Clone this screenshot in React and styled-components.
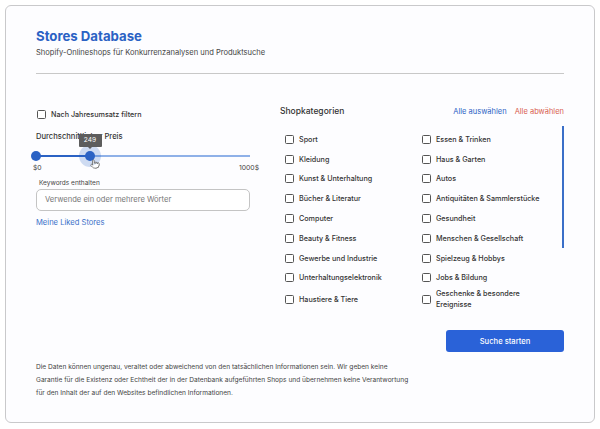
import React from 'react';
import styled, { createGlobalStyle } from 'styled-components';
import { Pointer } from 'lucide-react';

const Global = createGlobalStyle`
  html, body { margin: 0; background: #ffffff; }
  body { width: 600px; height: 429px; overflow: hidden; font-family: Inter, "Liberation Sans", sans-serif; }
  * { box-sizing: border-box; }
`;

const Card = styled.div`
  width: 590px;
  height: 418px;
  margin: 5px 0 0 5px;
  padding: 21px 30px 0 30px;
  background: #fdfdff;
  border: 1px solid #c9c9cb;
  border-radius: 6px;
`;

const Title = styled.h1`
  margin: 0;
  font-size: 13.2px;
  line-height: 18px;
  font-weight: 700;
  color: #2b62c4;
`;

const Subtitle = styled.p`
  margin: 2px 0 0;
  font-size: 7.55px;
  line-height: 11px;
  color: #444;
`;

const Divider = styled.hr`
  margin: 15px 0 0;
  border: 0;
  border-top: 1px solid #c8c8c8;
`;

const Columns = styled.div`
  display: grid;
  grid-template-columns: 214px 284px;
  column-gap: 30px;
  margin-top: 31px;
`;

const Left = styled.div`
  display: flex;
  flex-direction: column;
  padding-top: 3px;
`;

const Box = styled.span`
  flex: none;
  width: 9px;
  height: 9px;
  border: 1px solid #555;
  border-radius: 1.5px;
  background: #fff;
`;

const FilterRow = styled.label`
  display: flex;
  align-items: center;
  gap: 5px;
  height: 12px;
  padding-left: 1px;
  font-size: 7.2px;
  font-weight: 500;
  color: #333;
`;

const SliderLabel = styled.div`
  margin-top: 11px;
  font-size: 7.6px;
  line-height: 11px;
  font-weight: 500;
  color: #333;
`;

const Slider = styled.div`
  position: relative;
  height: 4px;
  margin-top: 12px;
  display: flex;
  align-items: center;
`;

const RailDone = styled.div`
  width: 54px;
  height: 2px;
  background: #2b62c4;
`;

const RailRest = styled.div`
  flex: 1;
  height: 2px;
  background: #8fb1e8;
`;

const Thumb = styled.span`
  position: absolute;
  top: -3px;
  left: ${p => p.$at}px;
  width: 10px;
  height: 10px;
  margin-left: -5px;
  border-radius: 50%;
  background: #2b62c4;
`;

const Halo = styled.span`
  position: absolute;
  top: -9px;
  left: 54px;
  width: 22px;
  height: 22px;
  margin-left: -11px;
  border-radius: 50%;
  background: rgba(43, 98, 196, 0.22);
`;

const Tip = styled.span`
  position: absolute;
  top: -20px;
  left: 54px;
  width: 23px;
  height: 13px;
  margin-left: -11.5px;
  background: #5d5d5d;
  border-radius: 1px;
  color: #fff;
  font-size: 6.6px;
  line-height: 13px;
  text-align: center;
  &::after {
    content: '';
    position: absolute;
    left: 9px;
    bottom: -2px;
    border-left: 2.5px solid transparent;
    border-right: 2.5px solid transparent;
    border-top: 2px solid #5d5d5d;
  }
`;

const Hand = styled(Pointer)`
  position: absolute;
  top: 5px;
  left: 54px;
  color: #444;
  fill: #fff;
`;

const Scale = styled.div`
  display: flex;
  justify-content: space-between;
  margin-top: 5px;
  font-size: 6.8px;
  line-height: 9px;
  color: #444;
  margin-right: -9px;
  margin-left: -3px;
`;

const FieldLabel = styled.div`
  margin: 7px 0 0 3px;
  font-size: 6.5px;
  line-height: 9px;
  color: #444;
`;

const Input = styled.div`
  height: 22px;
  margin-top: 1px;
  padding-left: 8px;
  border: 1px solid #c4c4c4;
  border-radius: 5px;
  background: #fff;
  font-size: 7.6px;
  line-height: 20px;
  color: #777;
`;

const LikedLink = styled.a`
  margin-top: 5.5px;
  font-size: 7.6px;
  line-height: 11px;
  color: #3b70c9;
`;

const Right = styled.div`
  display: flex;
  flex-direction: column;
`;

const CategoryHead = styled.div`
  display: flex;
  align-items: center;
  height: 12px;
  font-size: 7.5px;
`;

const CategoryTitle = styled.h2`
  margin: 0 auto 0 0;
  font-size: 8.5px;
  font-weight: 500;
  color: #333;
`;

const HeadAction = styled.a`
  margin-left: 8px;
  color: ${p => (p.$danger ? '#d9604f' : '#2b62c4')};
`;

const ListWrap = styled.div`
  position: relative;
  margin-top: 9px;
  height: 191px;
`;

const Grid = styled.div`
  display: grid;
  grid-template-columns: 137px 1fr;
  grid-auto-rows: minmax(19.8px, auto);
  padding: 3.5px 15px 0 5px;
`;

const Item = styled.label`
  display: flex;
  align-items: center;
  gap: 5px;
  font-size: 7.2px;
  line-height: 11.3px;
  font-weight: 450;
  color: #333;
`;

const Scrollbar = styled.div`
  position: absolute;
  right: 0;
  top: 0;
  width: 2px;
  height: 122px;
  background: #3a6fc8;
`;

const Submit = styled.button`
  align-self: flex-end;
  width: 118px;
  height: 22px;
  margin-top: 13px;
  border: 0;
  border-radius: 3px;
  background: #2a62d8;
  color: #fff;
  font: 500 7.6px Inter, sans-serif;
`;

const Notice = styled.p`
  width: 378px;
  margin: 9px 0 0;
  font-size: 6.6px;
  line-height: 13px;
  color: #444;
`;

const left = ['Sport', 'Kleidung', 'Kunst & Unterhaltung', 'Bücher & Literatur', 'Computer', 'Beauty & Fitness', 'Gewerbe und Industrie', 'Unterhaltungselektronik', 'Haustiere & Tiere'];
const right = ['Essen & Trinken', 'Haus & Garten', 'Autos', 'Antiquitäten & Sammlerstücke', 'Gesundheit', 'Menschen & Gesellschaft', 'Spielzeug & Hobbys', 'Jobs & Bildung', 'Geschenke & besondere Ereignisse'];

const App = () => (
  <>
    <Global />
    <Card>
      <Title>Stores Database</Title>
      <Subtitle>Shopify-Onlineshops für Konkurrenzanalysen und Produktsuche</Subtitle>
      <Divider />
      <Columns>
        <Left>
          <FilterRow><Box />Nach Jahresumsatz filtern</FilterRow>
          <SliderLabel>Durchschnittlicher Preis</SliderLabel>
          <Slider>
            <RailDone />
            <RailRest />
            <Halo />
            <Thumb $at={0} />
            <Thumb $at={54} />
            <Tip>249</Tip>
            <Hand size={10} strokeWidth={1.5} />
          </Slider>
          <Scale><span>$0</span><span>1000$</span></Scale>
          <FieldLabel>Keywords enthalten</FieldLabel>
          <Input>Verwende ein oder mehrere Wörter</Input>
          <LikedLink>Meine Liked Stores</LikedLink>
        </Left>
        <Right>
          <CategoryHead>
            <CategoryTitle>Shopkategorien</CategoryTitle>
            <HeadAction>Alle auswählen</HeadAction>
            <HeadAction $danger>Alle abwählen</HeadAction>
          </CategoryHead>
          <ListWrap>
            <Grid>
              {left.map((name, i) => (
                <React.Fragment key={name}>
                  <Item><Box />{name}</Item>
                  <Item><Box />{right[i]}</Item>
                </React.Fragment>
              ))}
            </Grid>
            <Scrollbar />
          </ListWrap>
          <Submit>Suche starten</Submit>
        </Right>
      </Columns>
      <Notice>Die Daten können ungenau, veraltet oder abweichend von den tatsächlichen Informationen sein. Wir geben keine Garantie für die Existenz oder Echtheit der in der Datenbank aufgeführten Shops und übernehmen keine Verantwortung für den Inhalt der auf den Websites befindlichen Informationen.</Notice>
    </Card>
  </>
);

export default App;
